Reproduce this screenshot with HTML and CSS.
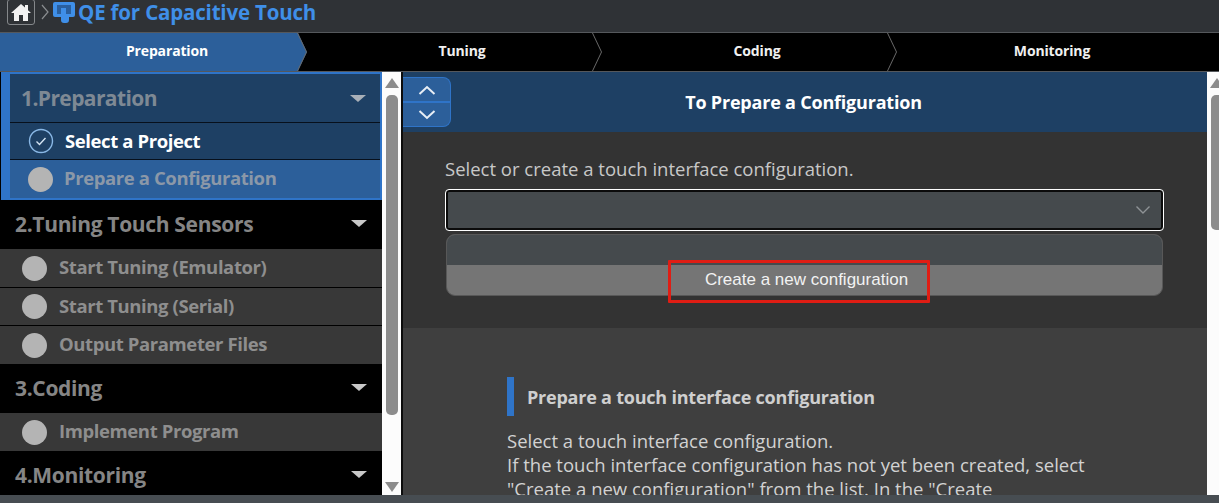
FILE: index.html
```html
<!DOCTYPE html>
<html lang="en">
<head>
<meta charset="utf-8">
<title>QE for Capacitive Touch</title>
<link rel="stylesheet" href="styles.css">
</head>
<body>
<div class="app">
  <header class="topbar">
    <span class="home">
      <svg width="22" height="20" viewBox="0 0 22 20"><path d="M11 2 1 11h3v8h5v-6h4v6h5v-8h3l-3-2.700V3h-3v2.600z" fill="#f2f2f2"/></svg>
    </span>
    <svg class="crumb" width="8" height="16" viewBox="0 0 8 16"><path d="M1 1l6 7-6 7" fill="none" stroke="#8a8d90" stroke-width="1.200"/></svg>
    <svg class="logo" width="24" height="24" viewBox="0 0 24 24"><rect x="1" y="1" width="22" height="15" rx="2" fill="#3f8fe8"/><rect x="5" y="4" width="14" height="9" fill="#2a5f9e"/><path d="M9 7h5v8h3v4a3 3 0 0 1-3 3h-2a3 3 0 0 1-3-3z" fill="#3f8fe8"/></svg>
    <h1 class="apptitle">QE for Capacitive Touch</h1>
  </header>

  <nav class="tabs">
    <div class="tab tab-active">Preparation</div>
    <div class="tab">Tuning</div>
    <div class="tab">Coding</div>
    <div class="tab tab-last">Monitoring</div>
  </nav>

  <div class="body">
    <aside class="side">
      <div class="steps">
        <section class="group-active">
          <div class="head head-active"><span>1.Preparation</span><i class="caret"></i></div>
          <div class="item item-done">
            <svg class="check" width="26" height="26" viewBox="0 0 26 26"><circle cx="13" cy="13" r="11.500" fill="none" stroke="#8ab8e6" stroke-width="1.400"/><path d="M8.500 13.500l3 3 6-6.500" fill="none" stroke="#d5e4f3" stroke-width="1.400"/></svg>
            <span>Select a Project</span>
          </div>
          <div class="item item-current"><i class="dot"></i><span>Prepare a Configuration</span></div>
        </section>
        <div class="head">2.Tuning Touch Sensors<i class="caret"></i></div>
        <div class="item"><i class="dot"></i><span>Start Tuning (Emulator)</span></div>
        <div class="item item-sep"><i class="dot"></i><span>Start Tuning (Serial)</span></div>
        <div class="item item-sep item-tall"><i class="dot"></i><span>Output Parameter Files</span></div>
        <div class="head">3.Coding<i class="caret"></i></div>
        <div class="item"><i class="dot"></i><span>Implement Program</span></div>
        <div class="head">4.Monitoring<i class="caret"></i></div>
      </div>
      <div class="scroll scroll-side">
        <i class="arrow-up"></i>
        <i class="thumb thumb-side"></i>
        <i class="arrow-down"></i>
      </div>
    </aside>

    <main class="main">
      <div class="title">
        <div class="updown">
          <button class="ud ud-top" type="button" aria-label="Up"><svg width="18" height="10" viewBox="0 0 18 10"><path d="M1.500 9 9 2l7.500 7" fill="none" stroke="#e8eef5" stroke-width="2"/></svg></button>
          <button class="ud" type="button" aria-label="Down"><svg width="18" height="10" viewBox="0 0 18 10"><path d="M1.500 1 9 8l7.500-7" fill="none" stroke="#e8eef5" stroke-width="2"/></svg></button>
        </div>
        <h2>To Prepare a Configuration</h2>
      </div>
      <div class="config">
        <p class="config-label">Select or create a touch interface configuration.</p>
        <div class="select">
          <svg width="16" height="10" viewBox="0 0 16 10"><path d="M1.500 1.500 8 8l6.500-6.500" fill="none" stroke="#8f9396" stroke-width="1.400"/></svg>
        </div>
        <div class="menu">
          <div class="opt-empty"></div>
          <div class="opt">Create a new configuration</div>
          <div class="redbox"></div>
        </div>
      </div>
      <div class="doc">
        <h3>Prepare a touch interface configuration</h3>
        <p>Select a touch interface configuration.<br>If the touch interface configuration has not yet been created, select<br>"Create a new configuration" from the list. In the "Create</p>
      </div>
    </main>

    <div class="scroll scroll-main">
      <i class="arrow-up"></i>
      <i class="thumb thumb-main"></i>
    </div>
  </div>
  <div class="strip"></div>
</div>
</body>
</html>
```
FILE: styles.css
```css
* { box-sizing: border-box; }
html, body { margin: 0; height: 100%; overflow: hidden; }
body { background: #2f3236; font-family: "Open Sans", "Noto Sans", sans-serif; }
.app { width: 1219px; height: 503px; display: flex; flex-direction: column; }

.topbar { height: 33px; flex: none; display: flex; align-items: flex-start; background: #2f3236; border-bottom: 1px solid #55585c; }
.home { width: 28px; height: 26px; margin: -1px 0 0 7px; border: 1px solid #85888b; border-radius: 3px; display: flex; align-items: center; justify-content: center; }
.crumb { margin: 4px 0 0 6px; }
.logo { margin: 1px 0 0 3px; }
.apptitle { margin: -1px 0 0 2px; font-size: 20.500px; line-height: 26px; font-weight: 700; color: #3f8fe8; letter-spacing: -0.180px; }

.tabs { height: 39px; flex: none; display: flex; padding-left: 12px; background: #000; color: #f0f0f0; border-bottom: 1px solid #55585c; }
.tab { position: relative; width: 295px; padding: 0 0 3px 15px; display: flex; align-items: center; justify-content: center; font-size: 14px; font-weight: 700; letter-spacing: -0.150px; isolation: isolate; }
.tab::after { content: ""; position: absolute; right: 0; top: 0; width: 10px; height: 38px; background: #6a6a6a; clip-path: polygon(0 0, 1px 0, 100% 50%, 1px 100%, 0 100%, 9px 50%); }
.tab-last::after { display: none; }
.tab-active { color: #fff; }
.tab-active::before { content: ""; position: absolute; left: -12px; right: 0; top: 0; height: 38px; background: #2c5f9a; clip-path: polygon(0 0, 298px 0, 100% 50%, 298px 100%, 0 100%); z-index: -1; }

.body { flex: 1; min-height: 0; display: flex; background: #000; }
.side { width: 401px; flex: none; display: flex; }
.steps { width: 382px; flex: none; overflow: hidden; background: #000; color: #8a8a8a; }
.head { height: 49px; padding: 0 15px 2px 15px; display: flex; align-items: center; justify-content: space-between; font-size: 21px; font-weight: 700; color: #858585; letter-spacing: -0.330px; }
.caret { width: 0; height: 0; border-left: 8px solid transparent; border-right: 8px solid transparent; border-top: 7px solid #c8c8c8; }
.item { height: 38px; padding: 0 0 3px 22px; display: flex; align-items: center; gap: 12px; background: #383838; font-size: 18.500px; font-weight: 700; color: #8e8e8e; letter-spacing: -0.400px; }
.item .dot { margin-top: 3px; }
.item-sep { border-top: 1px solid #000; }
.item-tall { height: 39px; }
.dot { width: 25px; height: 25px; border-radius: 50%; background: #b4b4b4; flex: none; }

.group-active { margin-left: 1px; height: 128px; border: solid #2f74c8; border-width: 2px 2px 2px 9px; background: #1e4064; }
.head-active { height: 49px; padding: 0 14px 0 11px; color: #7e8994; border-bottom: 1px solid #07101c; letter-spacing: -0.600px; }
.head-active .caret { border-top-color: #a9b0b8; }
.group-active .item { padding-left: 18px; gap: 11px; background: #1e4064; }
.item-done { height: 37px; color: #fff; border-bottom: 1px solid #07101c; }
.group-active .item-done { color: #fff; padding-top: 1px; padding-bottom: 3px; }
.group-active .item-done .check { margin-top: 2px; }
.group-active .item-current { height: 38px; background: #2c5f9a; color: #8b98a8; }
.check { flex: none; }

.scroll { background: #fcfcfc; position: relative; flex: none; }
.scroll-side { width: 19px; }
.scroll-main { width: 12px; }
.arrow-up, .arrow-down { position: absolute; left: 3px; width: 0; height: 0; border-left: 7px solid transparent; border-right: 7px solid transparent; }
.arrow-up { top: 6px; border-bottom: 10px solid #8c8c8c; }
.arrow-down { bottom: 3px; border-top: 10px solid #8c8c8c; }
.thumb { position: absolute; left: 4px; width: 12px; background: #8c8c8c; border-radius: 5px; }
.thumb-side { top: 23px; height: 320px; }
.thumb-main { top: 23px; height: 135px; }

.main { width: 806px; flex: none; border-left: 2px solid #0c0c0c; overflow: hidden; background: #3f3f3f; color: #cfcfcf; }
.title { position: relative; height: 60px; display: flex; align-items: center; justify-content: center; background: #1e4064; }
.title h2 { margin: 0 3px 0 0; font-size: 18px; font-weight: 700; color: #fff; letter-spacing: -0.200px; }
.updown { position: absolute; left: 0; top: 5px; width: 48px; height: 50px; display: flex; flex-direction: column; background: #2c5f9a; border: 1px solid #2f74c8; border-left: 0; border-radius: 0 8px 8px 0; }
.ud { flex: 1; padding: 0; border: 0; background: transparent; display: flex; align-items: center; justify-content: center; }
.ud-top { border-bottom: 2px solid #2f74c8; }

.config { height: 196px; padding: 25px 43px 0 42px; background: #333; }
.config-label { margin: 0 0 8px; font-size: 18.500px; line-height: 24px; color: #c8c8c8; }
.select { height: 42px; width: 719px; display: flex; align-items: center; justify-content: flex-end; padding-right: 12px; background: #454a4d; border: 1px solid #fff; border-radius: 4px; box-shadow: inset 0 0 0 2px #0b0b0b; }
.menu { position: relative; width: 717px; height: 62px; margin: 3px 0 0 1px; border-radius: 9px; background: #757575; font-family: "Liberation Sans", Arial, sans-serif; border: 1px solid #585858; }
.opt-empty { height: 30px; background: #454a4d; border-radius: 8px 8px 0 0; }
.opt { height: 30px; display: flex; align-items: center; justify-content: center; padding-left: 4px; font-size: 17px; color: #f2f2f2; }
.redbox { position: absolute; left: 221px; top: 25px; width: 262px; height: 43px; border: 3px solid #e01d14; border-radius: 1px; }

.doc { padding: 49px 60px 0 104px; }
.doc h3 { margin: 0 0 13px; height: 39px; padding-left: 13px; display: flex; align-items: center; border-left: 7px solid #2f74c8; font-size: 18px; font-weight: 700; color: #cfcfcf; letter-spacing: -0.220px; }
.doc p { margin: 0; font-size: 18.500px; line-height: 24px; color: #d2d2d2; white-space: nowrap; }

.strip { height: 8px; flex: none; background: #474d52; }
```
